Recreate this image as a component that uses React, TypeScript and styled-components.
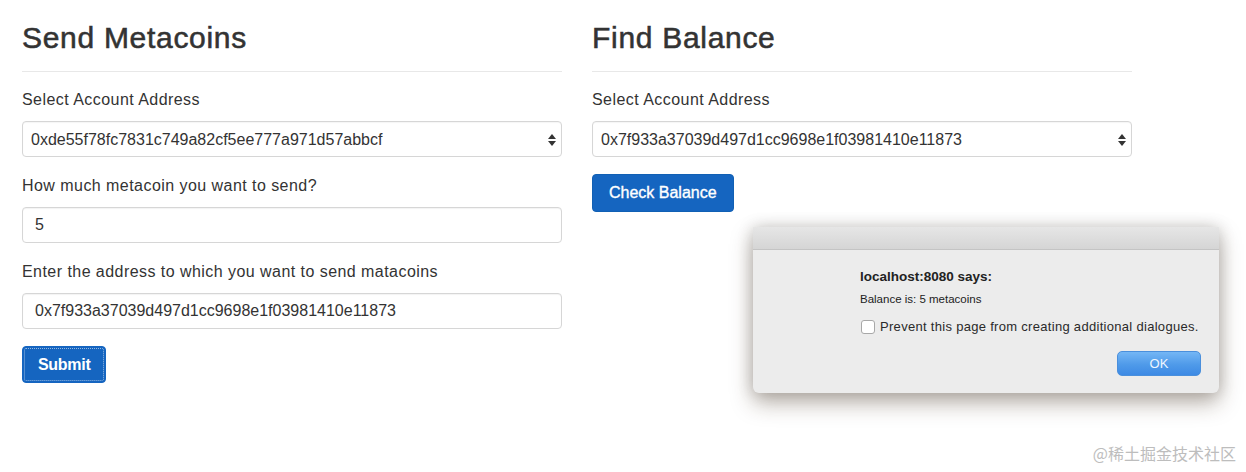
import React, { FC } from 'react';
import styled, { createGlobalStyle } from 'styled-components';

const GlobalStyle = createGlobalStyle`
  html, body {
    margin: 0;
    padding: 0;
    background: #fff;
  }
  body {
    font-family: "Liberation Sans", Arial, sans-serif;
    color: #333;
    width: 1246px;
    height: 472px;
    overflow: hidden;
    position: relative;
  }
`;

const Page = styled.main`
  display: grid;
  grid-template-columns: 540px 540px;
  column-gap: 30px;
  padding: 0 22px;
`;

const Column = styled.section`
  display: flex;
  flex-direction: column;
  align-items: flex-start;
`;

const Heading = styled.h2`
  margin: 21px 0 0;
  font-size: 30px;
  line-height: 33px;
  font-weight: 400;
  letter-spacing: 0.7px;
  -webkit-text-stroke: 0.55px #333;
  color: #333;
`;

const Divider = styled.hr`
  align-self: stretch;
  margin: 17px 0 0;
  border: 0;
  border-top: 1px solid #e8e8e8;
`;

const FormGroup = styled.div`
  display: flex;
  flex-direction: column;
  align-self: stretch;
  margin-top: ${p => (p.$first ? '17px' : '18px')};
`;

const Label = styled.label`
  font-size: 16px;
  line-height: 22px;
  letter-spacing: 0.45px;
  margin-bottom: 10px;
  color: #333;
`;

const SelectWrap = styled.div`
  position: relative;
  height: 36px;
`;

const Select = styled.select`
  appearance: none;
  -webkit-appearance: none;
  width: 100%;
  height: 36px;
  box-sizing: border-box;
  padding: 0 30px 0 8px;
  border: 1px solid #d6d6d6;
  border-radius: 4px;
  background: #fff;
  font-family: "Liberation Sans", Arial, sans-serif;
  font-size: 16px;
  color: #333;
  box-shadow: inset 0 1px 1px rgba(0, 0, 0, 0.04);
`;

const Arrows = styled.svg`
  position: absolute;
  right: 5px;
  top: 12px;
  pointer-events: none;
`;

const Input = styled.input`
  width: 100%;
  height: 36px;
  box-sizing: border-box;
  padding: 0 12px;
  border: 1px solid #d6d6d6;
  border-radius: 4px;
  background: #fff;
  font-family: "Liberation Sans", Arial, sans-serif;
  font-size: 16px;
  color: #333;
  box-shadow: inset 0 1px 1px rgba(0, 0, 0, 0.05);
`;

const PrimaryButton = styled.button`
  margin-top: 17px;
  height: ${p => (p.$focused ? '37px' : '38px')};
  padding: 0 ${p => (p.$focused ? '15px' : '16px')};
  border: 1px solid ${p => (p.$focused ? '#1565c0' : '#1160b4')};
  border-radius: 4px;
  background: #1565c0;
  color: #fff;
  font-family: "Liberation Sans", Arial, sans-serif;
  font-size: 16px;
  font-weight: ${p => (p.$focused ? 700 : 400)};
  -webkit-text-stroke: ${p => (p.$focused ? '0' : '0.35px')};
  letter-spacing: ${p => (p.$focused ? '-0.3px' : '0')};
  outline: ${p => (p.$focused ? '1px dotted rgba(255,255,255,0.55)' : 'none')};
  outline-offset: -3px;
  cursor: pointer;
`;

/* native alert look */
const Dialog = styled.div`
  position: absolute;
  left: 753px;
  top: 227px;
  width: 466px;
  height: 166px;
  display: flex;
  flex-direction: column;
  background: #ececec;
  border-radius: 0 0 6px 6px;
  box-shadow: 0 10px 22px rgba(60, 40, 20, 0.35), 0 0 16px rgba(0, 0, 0, 0.18);
`;

const TitleBar = styled.div`
  height: 22px;
  flex: none;
  background: linear-gradient(#e6e6e6, #d5d5d5);
  border-bottom: 1px solid #c4c4c4;
`;

const DialogBody = styled.div`
  display: flex;
  flex-direction: column;
  padding: 18px 18px 0 107px;
  font-family: "Liberation Sans", Arial, sans-serif;
  color: #222;
`;

const DialogTitle = styled.div`
  font-size: 13.5px;
  font-weight: 700;
  line-height: 18px;
`;

const DialogMessage = styled.div`
  font-size: 11.5px;
  line-height: 16px;
  margin-top: 5px;
`;

const CheckRow = styled.label`
  display: flex;
  align-items: center;
  gap: 5px;
  margin-top: 12px;
  font-size: 13px;
  letter-spacing: 0.3px;
  white-space: nowrap;
  color: #2a2a2a;
`;

const CheckBox = styled.span`
  width: 12px;
  height: 12px;
  margin-left: 1px;
  border: 1px solid #a8a8a8;
  border-radius: 3px;
  background: #fff;
  flex: none;
`;

const DialogActions = styled.div`
  display: flex;
  justify-content: flex-end;
  margin-top: 17px;
`;

const OkButton = styled.button`
  width: 84px;
  height: 25px;
  border: 1px solid #4a8fdc;
  border-radius: 5px;
  background: linear-gradient(#74b6f5, #4f9ae9 55%, #3d8ae4);
  color: #eef6ff;
  font-family: "Liberation Sans", Arial, sans-serif;
  font-size: 13px;
`;

const Watermark = styled.div`
  position: absolute;
  right: 10px;
  bottom: 7px;
  font-family: "Noto Sans CJK SC", "Liberation Sans", sans-serif;
  font-size: 16px;
  color: #bdbdbd;
`;

const UpDown: FC = () => (
  <Arrows width="10" height="14" viewBox="0 0 10 14">
    <path d="M5 1 L9 6 H1 Z" fill="#333" />
    <path d="M5 13 L9 8 H1 Z" fill="#333" />
  </Arrows>
);

const App: FC = () => {
  return (
    <>
      <GlobalStyle />
      <Page>
        <Column>
          <Heading>Send Metacoins</Heading>
          <Divider />
          <FormGroup $first>
            <Label>Select Account Address</Label>
            <SelectWrap>
              <Select defaultValue="a">
                <option value="a">0xde55f78fc7831c749a82cf5ee777a971d57abbcf</option>
              </Select>
              <UpDown />
            </SelectWrap>
          </FormGroup>
          <FormGroup>
            <Label>How much metacoin you want to send?</Label>
            <Input defaultValue="5" />
          </FormGroup>
          <FormGroup>
            <Label>Enter the address to which you want to send matacoins</Label>
            <Input defaultValue="0x7f933a37039d497d1cc9698e1f03981410e11873" />
          </FormGroup>
          <PrimaryButton $focused>Submit</PrimaryButton>
        </Column>
        <Column>
          <Heading>Find Balance</Heading>
          <Divider />
          <FormGroup $first>
            <Label>Select Account Address</Label>
            <SelectWrap>
              <Select defaultValue="b">
                <option value="b">0x7f933a37039d497d1cc9698e1f03981410e11873</option>
              </Select>
              <UpDown />
            </SelectWrap>
          </FormGroup>
          <PrimaryButton>Check Balance</PrimaryButton>
        </Column>
      </Page>

      <Dialog>
        <TitleBar />
        <DialogBody>
          <DialogTitle>localhost:8080 says:</DialogTitle>
          <DialogMessage>Balance is: 5 metacoins</DialogMessage>
          <CheckRow>
            <CheckBox />
            Prevent this page from creating additional dialogues.
          </CheckRow>
          <DialogActions>
            <OkButton>OK</OkButton>
          </DialogActions>
        </DialogBody>
      </Dialog>

      <Watermark>@稀土掘金技术社区</Watermark>
    </>
  );
};

export default App;
